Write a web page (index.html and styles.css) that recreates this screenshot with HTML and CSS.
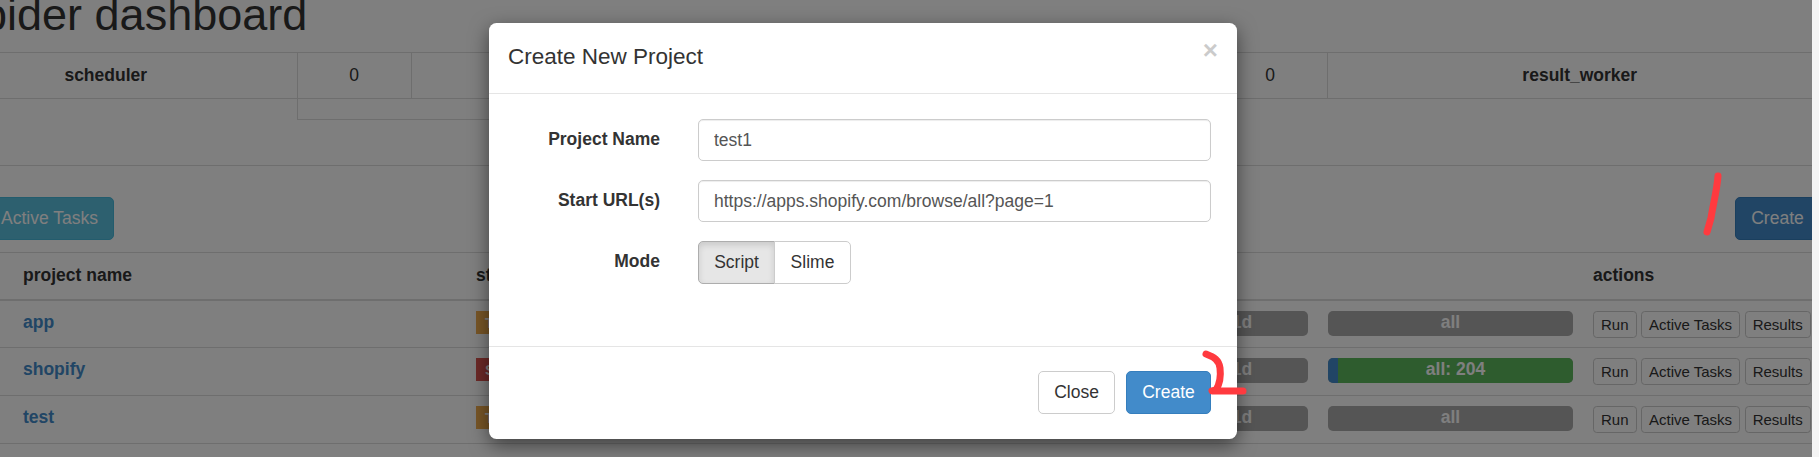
FILE: index.html
```html
<!DOCTYPE html>
<html lang="en">
<head>
<meta charset="utf-8">
<title>pyspider dashboard</title>
<link rel="stylesheet" href="styles.css">
</head>
<body>
<div class="viewport">
  <main class="page">
    <h1 class="page-title">pyspider dashboard</h1>
    <table class="stats">
      <tbody>
        <tr>
          <th class="stats-name">scheduler</th>
          <td class="stats-num">0</td>
          <td class="stats-mid"></td>
          <td class="stats-num">0</td>
          <th class="stats-name-r">result_worker</th>
        </tr>
        <tr>
          <td class="stats-blank"></td>
          <td class="stats-sub" colspan="2"></td>
          <td class="stats-blank" colspan="2"></td>
        </tr>
      </tbody>
    </table>
    <hr class="rule">
    <div class="toolbar">
      <button class="btn btn-info">Active Tasks</button>
      <button class="btn btn-primary-dim">Create</button>
    </div>
    <table class="projects">
      <thead>
        <tr>
          <th class="col-name">project name</th>
          <th class="col-status">status</th>
          <th class="col-rate"></th>
          <th class="col-prog"></th>
          <th class="col-prog2"></th>
          <th class="col-actions">actions</th>
        </tr>
      </thead>
      <tbody>
        <tr>
          <td class="col-name"><a class="proj-link">app</a></td>
          <td><span class="badge badge-todo">TODO</span></td>
          <td></td>
          <td><div class="bar"><span class="bar-label">1d</span></div></td>
          <td><div class="bar"><span class="bar-label">all</span></div></td>
          <td class="col-actions"><div class="actions"><button class="btn-xs">Run</button><button class="btn-xs">Active Tasks</button><button class="btn-xs">Results</button></div></td>
        </tr>
        <tr>
          <td class="col-name"><a class="proj-link">shopify</a></td>
          <td><span class="badge badge-stop">STOP</span></td>
          <td></td>
          <td><div class="bar"><span class="bar-label">1d</span></div></td>
          <td><div class="bar bar-split"><span class="bar-blue"></span><span class="bar-green">all: 204</span></div></td>
          <td class="col-actions"><div class="actions"><button class="btn-xs">Run</button><button class="btn-xs">Active Tasks</button><button class="btn-xs">Results</button></div></td>
        </tr>
        <tr>
          <td class="col-name"><a class="proj-link">test</a></td>
          <td><span class="badge badge-todo">TODO</span></td>
          <td></td>
          <td><div class="bar"><span class="bar-label">1d</span></div></td>
          <td><div class="bar"><span class="bar-label">all</span></div></td>
          <td class="col-actions"><div class="actions"><button class="btn-xs">Run</button><button class="btn-xs">Active Tasks</button><button class="btn-xs">Results</button></div></td>
        </tr>
      </tbody>
    </table>
  </main>
  <div class="backdrop"></div>
  <section class="modal">
    <header class="modal-header">
      <h4 class="modal-title">Create New Project</h4>
      <span class="modal-close">×</span>
    </header>
    <form class="modal-body">
      <div class="form-row">
        <label class="form-label">Project Name</label>
        <input class="form-input" type="text" value="test1">
      </div>
      <div class="form-row">
        <label class="form-label">Start URL(s)</label>
        <input class="form-input" type="text" value="https://apps.shopify.com/browse/all?page=1">
      </div>
      <div class="form-row">
        <label class="form-label">Mode</label>
        <div class="btn-group">
          <span class="toggle toggle-active">Script</span>
          <span class="toggle">Slime</span>
        </div>
      </div>
    </form>
    <footer class="modal-footer">
      <button class="btn btn-default">Close</button>
      <button class="btn btn-primary">Create</button>
    </footer>
  </section>
  <svg class="scribbles" width="1819" height="457" viewBox="0 0 1819 457" aria-hidden="true">
    <path d="M1718 176 C1717 190 1713 205 1711 218 L1707 232"/>
    <path d="M1206 354 C1214 357 1219 360 1220 368 C1221 376 1219 385 1216 390 L1212 391 C1222 391 1232 391 1243 391"/>
  </svg>
</div>
</body>
</html>
```
FILE: styles.css
```css
* { box-sizing: border-box; }
html, body { margin: 0; padding: 0; background: #fff; }
body { font-family: "Liberation Sans", Arial, sans-serif; font-size: 17.5px; line-height: 1.4286; color: #333; }
.viewport { position: relative; width: 1819px; height: 457px; overflow: hidden; }
.page { width: 1917px; margin-left: -85px; }
.page-title { margin: 0; height: 52px; font-size: 45px; font-weight: 500; line-height: 29px; color: #333; text-indent: -3px; white-space: nowrap; }
.stats { width: 100%; border-collapse: collapse; table-layout: fixed; }
.stats th, .stats td { height: 46px; padding: 0; text-align: center; border: 1px solid #ddd; border-left: 0; border-right: 0; font-size: 17.5px; }
.stats tr + tr td { height: 21px; border-top: 0; }
.stats-name { width: 382px; font-weight: 700; }
.stats .stats-num { width: 114px; border-left: 1px solid #ddd; border-right: 1px solid #ddd; }
.stats .stats-blank { border: 0; }
.stats .stats-sub { border-left: 1px solid #ddd; border-bottom: 1px solid #ddd; }
.stats-name-r { width: 505px; font-weight: 700; }
.rule { margin: 45px 0 31px; border: 0; border-top: 1px solid #ddd; }
.toolbar { display: flex; justify-content: space-between; padding: 0 12px 0 70px; height: 43px; }
.btn { height: 43px; padding: 0 15px; border: 1px solid transparent; border-radius: 5px; font: inherit; font-size: 17.5px; line-height: 1; white-space: nowrap; }
.btn-info { background: #5bc0de; border-color: #46b8da; color: #fff; }
.btn-primary-dim { background: #428bca; border-color: #357ebd; color: #fff; width: 85px; }
.btn-default { width: 77px; background: #fff; border-color: #ccc; color: #333; }
.btn-primary { width: 85px; background: #428bca; border-color: #357ebd; color: #fff; }
.projects { width: 100%; margin-top: 12px; border-collapse: collapse; table-layout: fixed; }
.projects th, .projects td { padding: 0 10px; border-top: 1px solid #ddd; text-align: left; font-size: 17.5px; }
.projects thead th { height: 47px; border-bottom: 2.5px solid #ddd; font-weight: 700; vertical-align: middle; }
.projects tbody td { height: 48px; padding-top: 10px; border-bottom: 1px solid #ddd; vertical-align: top; line-height: 23px; }
.projects .col-name { width: 551px; padding-left: 108px; }
.projects .col-status { width: 200px; }
.projects .col-rate { width: 500px; }
.projects .col-prog { width: 152px; }
.projects .col-prog2 { width: 265px; }
.proj-link { font-weight: 700; color: #428bca; }
.badge { display: block; width: max-content; padding: 0 9px; height: 23px; font-size: 15px; line-height: 23px; font-weight: 700; color: #fff; }
.badge-todo { background: #f0ad4e; }
.badge-stop { background: #d9534f; }
.bar { height: 25px; border-radius: 5px; background: #aaa; color: #fff; display: flex; overflow: hidden; font-size: 17.5px; line-height: 23px; font-weight: 700; text-align: center; }
.bar-label { flex: 1; }
.bar-blue { width: 10px; background: #428bca; }
.bar-green { flex: 1; background: #5cb85c; }
.actions { display: flex; gap: 4.5px; white-space: nowrap; }
.btn-xs { height: 27px; padding: 0 7px; border: 1px solid #ccc; border-radius: 3.75px; background: #fff; color: #333; font: inherit; font-size: 15px; line-height: 1; }
.backdrop { position: absolute; left: 0; top: 0; width: 1812px; height: 457px; background: rgba(0, 0, 0, 0.5); }
.viewport::after { content: ""; position: absolute; right: 0; top: 0; width: 7px; height: 457px; background: #f4f4f4; }
.modal { position: absolute; left: 489px; top: 23px; width: 748px; height: 416px; background: #fff; border-radius: 7.5px; box-shadow: 0 6px 19px rgba(0, 0, 0, 0.5); display: flex; flex-direction: column; }
.modal-header { position: relative; height: 71px; padding: 18px 19px; border-bottom: 1px solid #e5e5e5; }
.modal-title { margin: 0; font-size: 22.5px; font-weight: 500; line-height: 32px; color: #333; }
.modal-close { position: absolute; right: 19px; top: 14px; font-size: 26px; line-height: 1; font-weight: 700; color: #000; opacity: 0.2; }
.modal-body { flex: 1; padding: 25px 26px 0 0; display: flex; flex-direction: column; gap: 19px; }
.form-row { display: grid; grid-template-columns: 171px 1fr; column-gap: 38px; align-items: start; }
.form-label { text-align: right; font-weight: 700; line-height: 25px; padding-top: 8px; color: #333; }
.form-input { width: 100%; height: 42px; padding: 0 15px; border: 1px solid #ccc; border-radius: 5px; font: inherit; color: #555; background: #fff; box-shadow: inset 0 1px 1px rgba(0, 0, 0, 0.075); outline: 0; }
.btn-group { display: flex; height: 43px; width: 153px; }
.toggle { display: flex; align-items: center; justify-content: center; height: 43px; border: 1px solid #ccc; color: #333; }
.toggle:first-child { width: 77px; border-radius: 5px 0 0 5px; }
.toggle:last-child { width: 77px; margin-left: -1px; border-radius: 0 5px 5px 0; background: #fff; }
.toggle-active { background: #e6e6e6; border-color: #adadad; box-shadow: inset 0 3px 6px rgba(0, 0, 0, 0.125); }
.modal-footer { height: 93px; padding: 24px 26px 0 0; border-top: 1px solid #e5e5e5; display: flex; justify-content: flex-end; gap: 11px; }
.scribbles { position: absolute; left: 0; top: 0; pointer-events: none; }
.scribbles path { fill: none; stroke: #ff3a3f; stroke-width: 7; stroke-linecap: round; stroke-linejoin: round; }
```
